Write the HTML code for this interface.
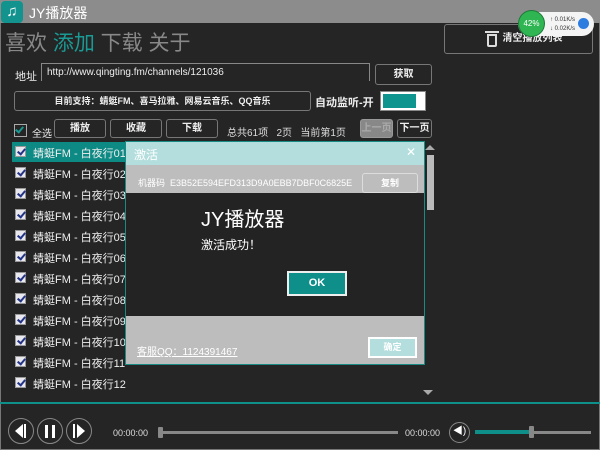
<!DOCTYPE html><html><head><meta charset="utf-8"><style>
*{box-sizing:border-box;margin:0;padding:0}
body{width:600px;height:450px;overflow:hidden;background:#252525;font-family:"Liberation Sans","Noto Sans CJK SC",sans-serif;position:relative;color:#eee}
.a{position:absolute}
.btn{position:absolute;border:1px solid #777;border-radius:3px;background:#252525;color:#eee;font-size:10px;font-weight:bold;text-align:center}
.row{position:absolute;left:12px;width:114px;height:20px;font-size:11px;color:#eee}
.row .cb{position:absolute;left:3px;top:4px;width:11px;height:11px;background:#e8e8ee;border:1px solid #999}
.row .cb:after{content:"";position:absolute;left:3px;top:0px;width:3px;height:6px;border:solid #223388;border-width:0 2px 2px 0;transform:rotate(40deg)}
.row span{position:absolute;left:21px;top:3px}
.circ{position:absolute;top:418px;width:26px;height:26px;border:1.5px solid #888;border-radius:50%}
</style></head><body>
<div class="a" style="left:0;top:0;width:600px;height:23px;background:#8c8c8c"></div>
<div class="a" style="left:1px;top:1px;width:22px;height:22px;background:#12938e;border-radius:4px;color:#fff;font-size:15px;text-align:center;line-height:22px">♫</div>
<div class="a" style="left:29px;top:3px;font-size:14px;color:#fff">JY播放器</div>
<div class="a" style="left:0;top:23px;width:600px;height:427px;border:1px solid #777;border-top:none"></div>
<div class="a" style="left:5px;top:27px;font-size:21px;color:#888;letter-spacing:0">喜欢 <span style="color:#1a9a94">添加</span> 下载 关于</div>
<div class="btn" style="left:444px;top:24px;width:149px;height:30px;font-size:10px;line-height:28px;padding-left:28px">清空播放列表</div>
<div class="a" style="left:485px;top:31px;width:14px;height:2px;background:#ddd"></div>
<div class="a" style="left:487px;top:34px;width:10px;height:13px;border:2px solid #ddd;border-radius:0 0 2px 2px"></div>
<div class="a" style="left:518px;top:12px;width:76px;height:24px;background:#f4f4f4;border-radius:12px"></div>
<div class="a" style="left:518px;top:10px;width:27px;height:27px;background:#2fb552;border-radius:50%;border:1px solid #1c7a38;color:#fff;font-size:8px;text-align:center;line-height:25px">42%</div>
<div class="a" style="left:550px;top:16px;font-size:6px;color:#333;line-height:9px">↑ 0.01K/s<br>↓ 0.02K/s</div>
<div class="a" style="left:578px;top:18px;width:11px;height:11px;background:#2d7de0;border-radius:50%"></div>
<div class="a" style="left:15px;top:68px;font-size:11px">地址</div>
<div class="a" style="left:41px;top:63px;width:329px;height:18px;border-left:1px solid #888;border-top:1px solid #888;border-right:1px solid #888;font-size:10px;padding:3px 5px">http://www.qingting.fm/channels/121036</div>
<div class="btn" style="left:375px;top:64px;width:57px;height:21px;line-height:19px">获取</div>
<div class="btn" style="left:14px;top:91px;width:297px;height:20px;line-height:18px;font-size:9px">目前支持：蜻蜓FM、喜马拉雅、网易云音乐、QQ音乐</div>
<div class="a" style="left:315px;top:94px;font-size:11px;font-weight:bold">自动监听-开</div>
<div class="a" style="left:380px;top:91px;width:46px;height:20px;background:#fff;border:1px solid #888"><div style="margin:2px;width:33px;height:14px;background:#0e9590"></div></div>
<div class="a" style="left:14px;top:124px;width:13px;height:13px;border:1px solid #aaa"></div>
<div class="a" style="left:17px;top:125px;width:5px;height:8px;border:solid #1a9a94;border-width:0 2px 2px 0;transform:rotate(40deg)"></div>
<div class="a" style="left:32px;top:125px;font-size:10px">全选</div>
<div class="btn" style="left:54px;top:119px;width:52px;height:19px;line-height:17px">播放</div>
<div class="btn" style="left:110px;top:119px;width:52px;height:19px;line-height:17px">收藏</div>
<div class="btn" style="left:166px;top:119px;width:52px;height:19px;line-height:17px">下载</div>
<div class="a" style="left:227px;top:124px;font-size:10px;color:#ddd">总共61项&nbsp;&nbsp; 2页&nbsp;&nbsp; 当前第1页</div>
<div class="btn" style="left:360px;top:119px;width:33px;height:19px;line-height:17px;background:#888;color:#aaa;border-color:#999">上一页</div>
<div class="btn" style="left:397px;top:119px;width:35px;height:19px;line-height:17px">下一页</div>
<div class="a" style="left:12px;top:142px;width:114px;height:20px;background:#0e8a85"></div>
<div class="row" style="top:142px"><div class="cb"></div><span>蜻蜓FM - 白夜行01</span></div>
<div class="row" style="top:163px"><div class="cb"></div><span>蜻蜓FM - 白夜行02</span></div>
<div class="row" style="top:184px"><div class="cb"></div><span>蜻蜓FM - 白夜行03</span></div>
<div class="row" style="top:205px"><div class="cb"></div><span>蜻蜓FM - 白夜行04</span></div>
<div class="row" style="top:226px"><div class="cb"></div><span>蜻蜓FM - 白夜行05</span></div>
<div class="row" style="top:247px"><div class="cb"></div><span>蜻蜓FM - 白夜行06</span></div>
<div class="row" style="top:268px"><div class="cb"></div><span>蜻蜓FM - 白夜行07</span></div>
<div class="row" style="top:289px"><div class="cb"></div><span>蜻蜓FM - 白夜行08</span></div>
<div class="row" style="top:310px"><div class="cb"></div><span>蜻蜓FM - 白夜行09</span></div>
<div class="row" style="top:331px"><div class="cb"></div><span>蜻蜓FM - 白夜行10</span></div>
<div class="row" style="top:352px"><div class="cb"></div><span>蜻蜓FM - 白夜行11</span></div>
<div class="row" style="top:373px"><div class="cb"></div><span>蜻蜓FM - 白夜行12</span></div>
<div class="a" style="left:427px;top:155px;width:7px;height:55px;background:#bbb"></div>
<div class="a" style="left:425px;top:145px;border:5px solid transparent;border-bottom-color:#aaa;border-top:none"></div>
<div class="a" style="left:423px;top:390px;border:5px solid transparent;border-top-color:#aaa;border-bottom:none"></div>
<!-- dialog -->
<div class="a" style="left:125px;top:141px;width:300px;height:224px;border:1px solid #1a8a85;background:#bdbdbd">
<div style="height:23px;background:#b3dedd;color:#fff;font-size:12px;padding:4px 0 0 8px">激活<span style="position:absolute;right:8px;top:3px">✕</span></div>
<div class="a" style="left:12px;top:34px;font-size:9px;color:#fff">机器码&nbsp; E3B52E594EFD313D9A0EBB7DBF0C6825E</div>
<div class="a" style="left:236px;top:31px;width:56px;height:20px;border:1px solid #ddd;border-radius:3px;font-size:9px;color:#fff;text-align:center;line-height:18px;font-weight:bold">复制</div>
<div class="a" style="left:0;top:51px;width:298px;height:123px;background:#232323">
<div class="a" style="left:75px;top:10px;font-size:20px;color:#fff">JY播放器</div>
<div class="a" style="left:75px;top:43px;font-size:12px;color:#fff">激活成功！</div>
<div class="a" style="left:161px;top:78px;width:60px;height:25px;background:#0e8f8a;border:2px solid #eee;color:#fff;font-size:11px;font-weight:bold;text-align:center;line-height:21px">OK</div>
</div>
<div class="a" style="left:11px;top:201px;font-size:10px;color:#fff;text-decoration:underline">客服QQ：1124391467</div>
<div class="a" style="left:242px;top:195px;width:49px;height:21px;background:#b3dedd;border:2px solid #fff;color:#fff;font-size:9px;font-weight:bold;text-align:center;line-height:17px">确定</div>
</div>
<!-- player -->
<div class="a" style="left:0;top:402px;width:600px;height:2px;background:#0e8f8a"></div>
<div class="circ" style="left:8px"><div class="a" style="left:6px;top:5px;border:7px solid transparent;border-right:8px solid #fff;border-left:none"></div><div class="a" style="left:15px;top:5px;width:2px;height:14px;background:#fff"></div></div>
<div class="circ" style="left:37px"><div class="a" style="left:7px;top:6px;width:3px;height:13px;background:#fff"></div><div class="a" style="left:14px;top:6px;width:3px;height:13px;background:#fff"></div></div>
<div class="circ" style="left:66px"><div class="a" style="left:6px;top:5px;width:2px;height:14px;background:#fff"></div><div class="a" style="left:10px;top:5px;border:7px solid transparent;border-left:8px solid #fff;border-right:none"></div></div>
<div class="a" style="left:113px;top:428px;font-size:9px;color:#ddd">00:00:00</div>
<div class="a" style="left:160px;top:431px;width:238px;height:3px;background:#888"></div>
<div class="a" style="left:158px;top:427px;width:5px;height:11px;background:#888;border-radius:1px"></div>
<div class="a" style="left:405px;top:428px;font-size:9px;color:#ddd">00:00:00</div>
<div class="a" style="left:449px;top:422px;width:21px;height:21px;border:1.5px solid #888;border-radius:50%;color:#fff;font-size:10px;text-align:center;line-height:18px">◀)</div>
<div class="a" style="left:475px;top:431px;width:116px;height:3px;background:#888"></div>
<div class="a" style="left:475px;top:430px;width:55px;height:4px;background:#0e8f8a"></div>
<div class="a" style="left:529px;top:426px;width:5px;height:12px;background:#888;border-radius:1px"></div>
</body></html>
